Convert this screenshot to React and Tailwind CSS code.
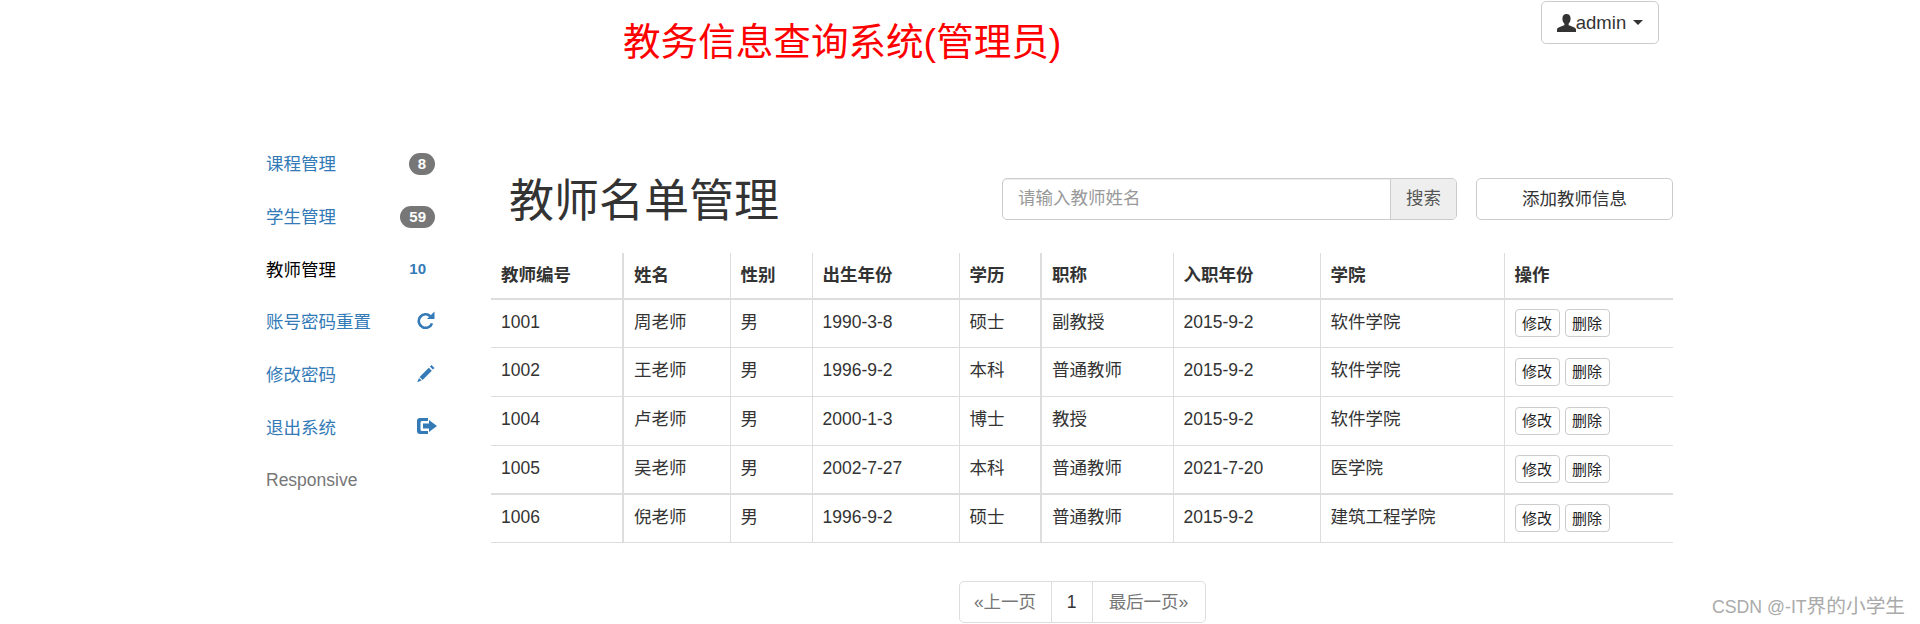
import React from "react";

const rows = [
  ["1001", "周老师", "男", "1990-3-8", "硕士", "副教授", "2015-9-2", "软件学院"],
  ["1002", "王老师", "男", "1996-9-2", "本科", "普通教师", "2015-9-2", "软件学院"],
  ["1004", "卢老师", "男", "2000-1-3", "博士", "教授", "2015-9-2", "软件学院"],
  ["1005", "吴老师", "男", "2002-7-27", "本科", "普通教师", "2021-7-20", "医学院"],
  ["1006", "倪老师", "男", "1996-9-2", "硕士", "普通教师", "2015-9-2", "建筑工程学院"],
];

const headers = ["教师编号", "姓名", "性别", "出生年份", "学历", "职称", "入职年份", "学院", "操作"];
const widths = ["w-[132px]", "w-[107px]", "w-[82px]", "w-[147px]", "w-[82px]", "w-[132px]", "w-[147px]", "w-[184px]", "w-[169px]"];

const UserIcon = () => (
  <svg viewBox="0 0 19 18" className="w-[19px] h-[18px] shrink-0" fill="#333">
    <path d="M9.500 0C6.800 0 5.400 2 5.400 4.800c0 2.200.9 4 2 5v1.500C5 12.200 0 13.400 0 15.500V18h19v-2.500c0-2.100-5-3.300-7.400-4.200V9.800c1.100-1 2-2.800 2-5C13.600 2 12.200 0 9.500 0z" />
  </svg>
);

const RefreshIcon = () => (
  <svg viewBox="0 0 18 18" className="w-[18px] h-[18px] -mt-[4px]" fill="none">
    <path d="M15 12.300A6.800 6.800 0 1 1 13.300 5.200" stroke="#337ab7" strokeWidth="2.600" />
    <path d="M17.500 .5v7.500h-7.500z" fill="#337ab7" />
  </svg>
);

const PencilIcon = () => (
  <svg viewBox="0 0 18 18" className="w-[18px] h-[19px] -mt-[4px]" fill="#337ab7">
    <path d="M14.500 .5l3 3-1.600 1.600-3-3zM11.800 3.200l3 3-9.200 9.200-3-3zM2 13.400l2.600 2.600L.2 17.800z" />
  </svg>
);

const LogoutIcon = () => (
  <svg viewBox="0 0 20 16" className="w-[20px] h-[16px] -mt-[4px] -mr-[2px]" fill="#337ab7">
    <path d="M3 0h8v3H5a1.500 1.500 0 0 0-1.500 1.500v7A1.500 1.500 0 0 0 5 13h6v3H3a3 3 0 0 1-3-3V3a3 3 0 0 1 3-3z" />
    <path d="M12 2l8 6-8 6v-3.500H6v-5h6z" />
  </svg>
);

const NavRow = ({ label, active, muted, children }) => (
  <div className="h-[52.700px] flex items-center justify-between">
    <span className={active ? "text-black" : muted ? "text-[#777]" : "text-[#337ab7]"}>{label}</span>
    {children}
  </div>
);

const Badge = ({ children }) => (
  <span className="h-[22px] px-[9px] rounded-full bg-[#777] text-white text-[15px] font-bold leading-[22px]">
    {children}
  </span>
);

const SmallBtn = ({ children }) => (
  <button className="w-[45px] h-[28px] border border-[#ccc] rounded-[4px] bg-white text-[15px] leading-none text-[#222]">
    {children}
  </button>
);

const App = () => {
  return (
    <div className="relative h-[624px] overflow-hidden bg-white text-[17.500px] text-[#333] font-['Liberation_Sans','Noto_Sans_CJK_SC',sans-serif]">

      {/* HEADER */}
      <div className="h-[137px] flex items-start pl-[623px]">
        <h1 className="mt-[20px] w-[918px] text-[37.600px] leading-[44px] text-[#f00]">
          教务信息查询系统(管理员)
        </h1>
        <button className="mt-[1px] w-[118px] h-[43px] flex items-center justify-center border border-[#ccc] rounded-[5px] bg-white text-[18.500px]">
          <UserIcon />
          <span>admin</span>
          <span className="ml-[7px] border-x-[5px] border-x-transparent border-t-[5px] border-t-[#333]" />
        </button>
      </div>

      <div className="flex pl-[266px]">
        {/* SIDE NAV */}
        <div className="w-[169px] pt-[1px]">
          <NavRow label="课程管理"><Badge>8</Badge></NavRow>
          <NavRow label="学生管理"><Badge>59</Badge></NavRow>
          <NavRow label="教师管理" active>
            <span className="mr-[9px] text-[15px] font-bold text-[#337ab7]">10</span>
          </NavRow>
          <NavRow label="账号密码重置"><RefreshIcon /></NavRow>
          <NavRow label="修改密码"><PencilIcon /></NavRow>
          <NavRow label="退出系统"><LogoutIcon /></NavRow>
          <NavRow label="Responsive" muted />
        </div>

        {/* MAIN */}
        <div className="ml-[56px] w-[1182px] pt-[41px]">
          <div className="h-[75px] flex items-start">
            <h2 className="ml-[18px] w-[493px] text-[45px] leading-[48px]">教师名单管理</h2>
            <div className="w-[455px] h-[42px] flex border border-[#ccc] rounded-[5px] overflow-hidden shadow-[inset_0_1px_1px_rgba(0,0,0,0.075)]">
              <div className="flex-1 px-[15px] leading-[38px] text-[#999]">请输入教师姓名</div>
              <div className="w-[66px] border-l border-[#ccc] bg-[#eee] text-center leading-[38px] text-[#555]">搜索</div>
            </div>
            <button className="ml-[19px] w-[197px] h-[42px] border border-[#ccc] rounded-[5px] bg-white">
              添加教师信息
            </button>
          </div>

          <table className="w-[1182px] table-fixed border-collapse">
            <thead>
              <tr className="h-[46px]">
                {headers.map((h, i) => (
                  <th
                    key={h}
                    className={`${widths[i]} px-[10px] text-left font-bold border-b-2 border-[#ddd] ${i > 0 ? (i === 1 || i === 5 ? "border-l-2" : "border-l") : ""}`}
                  >
                    {h}
                  </th>
                ))}
              </tr>
            </thead>
            <tbody>
              {rows.map((r, n) => (
                <tr key={r[0]} className={n === 0 || n === 4 ? "h-[48px]" : "h-[49px]"}>
                  {r.map((c, i) => (
                    <td
                      key={i}
                      className={`px-[10px] pb-[2px] border-[#ddd] ${n === 3 ? "border-b-2" : "border-b"} ${i > 0 ? (i === 1 || i === 5 ? "border-l-2" : "border-l") : ""}`}
                    >
                      {c}
                    </td>
                  ))}
                  <td className={`px-[10px] border-l border-[#ddd] ${n === 3 ? "border-b-2" : "border-b"}`}>
                    <div className="flex gap-[5px]">
                      <SmallBtn>修改</SmallBtn>
                      <SmallBtn>删除</SmallBtn>
                    </div>
                  </td>
                </tr>
              ))}
            </tbody>
          </table>

          {/* PAGINATION */}
          <div className="mt-[38px] flex justify-center">
            <div className="flex h-[42px] border border-[#ddd] rounded-[5px] leading-[40px]">
              <div className="w-[92px] text-center text-[#777] border-r border-[#ddd]">«上一页</div>
              <div className="w-[41px] text-center text-[#333] border-r border-[#ddd]">1</div>
              <div className="w-[112px] text-center text-[#777]">最后一页»</div>
            </div>
          </div>
        </div>
      </div>

      {/* watermark */}
      <div className="absolute left-[1712px] top-[595px] text-[17.700px] leading-[22px] whitespace-nowrap text-[#aaa]">
        CSDN @-IT<span className="text-[19.700px]">界的小学生</span>
      </div>
    </div>
  );
};

export default App;
